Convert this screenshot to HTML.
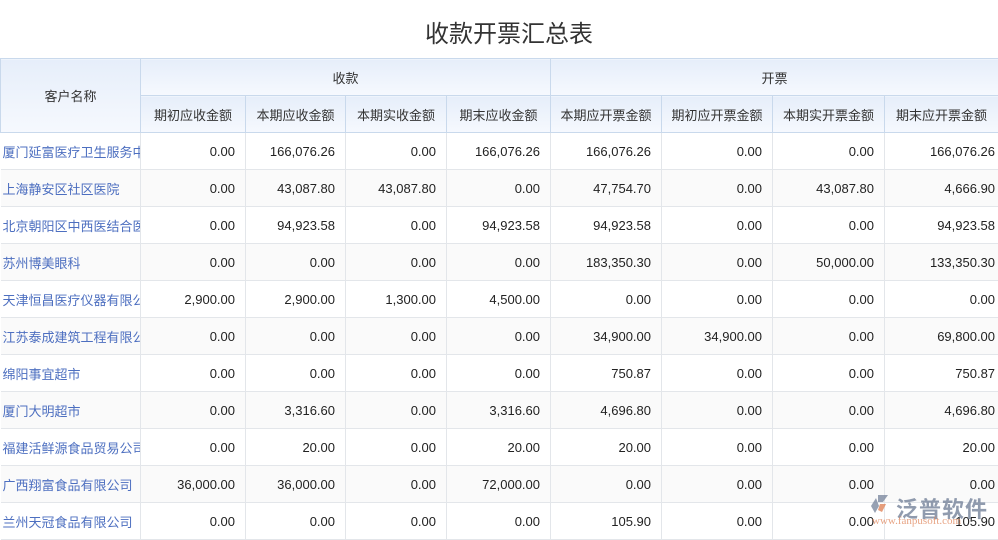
<!DOCTYPE html>
<html><head><meta charset="utf-8"><style>
body{margin:0;width:998px;height:539px;overflow:hidden;background:#fff;font-family:"Liberation Sans","Noto Sans CJK SC",sans-serif;position:relative}
h1{margin:0;position:absolute;top:14px;left:0;width:1018px;text-align:center;font-weight:normal;font-size:24px;color:#333;font-family:"Liberation Sans","Noto Sans CJK SC",sans-serif}
table{position:absolute;top:58px;left:0;border-collapse:collapse;table-layout:fixed;width:998px;font-size:13px}
th{font-weight:normal;color:#333;background:linear-gradient(#e6eefa,#f6f9fe);border:1px solid #c9d9ec;height:36px;padding:0}
td{border:1px solid #e3e6ea;height:36px;padding:0 10px 0 4px;text-align:right;color:#222;white-space:nowrap;overflow:hidden}
td:last-child{padding-right:3px}
td:first-child{text-align:left;color:#4d6fc0;padding-left:2px;padding-right:0;text-overflow:clip}
tr:nth-child(even) td{background:#fafafa}
table tr td:first-child{border-left:none}
.wm{position:absolute;left:896px;top:492px;font-size:22px;color:#7d8aa0;opacity:.85;letter-spacing:1px;font-weight:bold}
.wm2{position:absolute;left:872px;top:515px;font-size:11px;color:#e0855a;opacity:.75;font-family:"Liberation Serif",serif}
.logo{position:absolute;left:870px;top:494px;width:20px;height:20px}
</style></head><body>
<h1>收款开票汇总表</h1>
<table>
<colgroup><col style="width:140px"><col style="width:105px"><col style="width:100px"><col style="width:101px"><col style="width:104px"><col style="width:111px"><col style="width:111px"><col style="width:112px"><col style="width:114px"></colgroup>
<tr><th rowspan="2">客户名称</th><th colspan="4">收款</th><th colspan="4">开票</th></tr>
<tr><th>期初应收金额</th><th>本期应收金额</th><th>本期实收金额</th><th>期末应收金额</th><th>本期应开票金额</th><th>期初应开票金额</th><th>本期实开票金额</th><th>期末应开票金额</th></tr>
<tr><td>厦门延富医疗卫生服务中心</td><td>0.00</td><td>166,076.26</td><td>0.00</td><td>166,076.26</td><td>166,076.26</td><td>0.00</td><td>0.00</td><td>166,076.26</td></tr>
<tr><td>上海静安区社区医院</td><td>0.00</td><td>43,087.80</td><td>43,087.80</td><td>0.00</td><td>47,754.70</td><td>0.00</td><td>43,087.80</td><td>4,666.90</td></tr>
<tr><td>北京朝阳区中西医结合医院</td><td>0.00</td><td>94,923.58</td><td>0.00</td><td>94,923.58</td><td>94,923.58</td><td>0.00</td><td>0.00</td><td>94,923.58</td></tr>
<tr><td>苏州博美眼科</td><td>0.00</td><td>0.00</td><td>0.00</td><td>0.00</td><td>183,350.30</td><td>0.00</td><td>50,000.00</td><td>133,350.30</td></tr>
<tr><td>天津恒昌医疗仪器有限公司</td><td>2,900.00</td><td>2,900.00</td><td>1,300.00</td><td>4,500.00</td><td>0.00</td><td>0.00</td><td>0.00</td><td>0.00</td></tr>
<tr><td>江苏泰成建筑工程有限公司</td><td>0.00</td><td>0.00</td><td>0.00</td><td>0.00</td><td>34,900.00</td><td>34,900.00</td><td>0.00</td><td>69,800.00</td></tr>
<tr><td>绵阳事宜超市</td><td>0.00</td><td>0.00</td><td>0.00</td><td>0.00</td><td>750.87</td><td>0.00</td><td>0.00</td><td>750.87</td></tr>
<tr><td>厦门大明超市</td><td>0.00</td><td>3,316.60</td><td>0.00</td><td>3,316.60</td><td>4,696.80</td><td>0.00</td><td>0.00</td><td>4,696.80</td></tr>
<tr><td>福建活鲜源食品贸易公司</td><td>0.00</td><td>20.00</td><td>0.00</td><td>20.00</td><td>20.00</td><td>0.00</td><td>0.00</td><td>20.00</td></tr>
<tr><td>广西翔富食品有限公司</td><td>36,000.00</td><td>36,000.00</td><td>0.00</td><td>72,000.00</td><td>0.00</td><td>0.00</td><td>0.00</td><td>0.00</td></tr>
<tr><td>兰州天冠食品有限公司</td><td>0.00</td><td>0.00</td><td>0.00</td><td>0.00</td><td>105.90</td><td>0.00</td><td>0.00</td><td>105.90</td></tr>
</table>
<svg class="logo" viewBox="0 0 20 20"><path d="M8 1 L18 1 L13 8 L8 8 Z" fill="#7d8aa0" opacity=".8"/><path d="M6 4 L1 12 L5 19 L9 12 Z" fill="#7d8aa0" opacity=".8"/><path d="M10 10 L16 10 L12 18 L8 16 Z" fill="#e0855a" opacity=".8"/></svg>
<div class="wm">泛普软件</div>
<div class="wm2">www.fanpusoft.com</div>
</body></html>
